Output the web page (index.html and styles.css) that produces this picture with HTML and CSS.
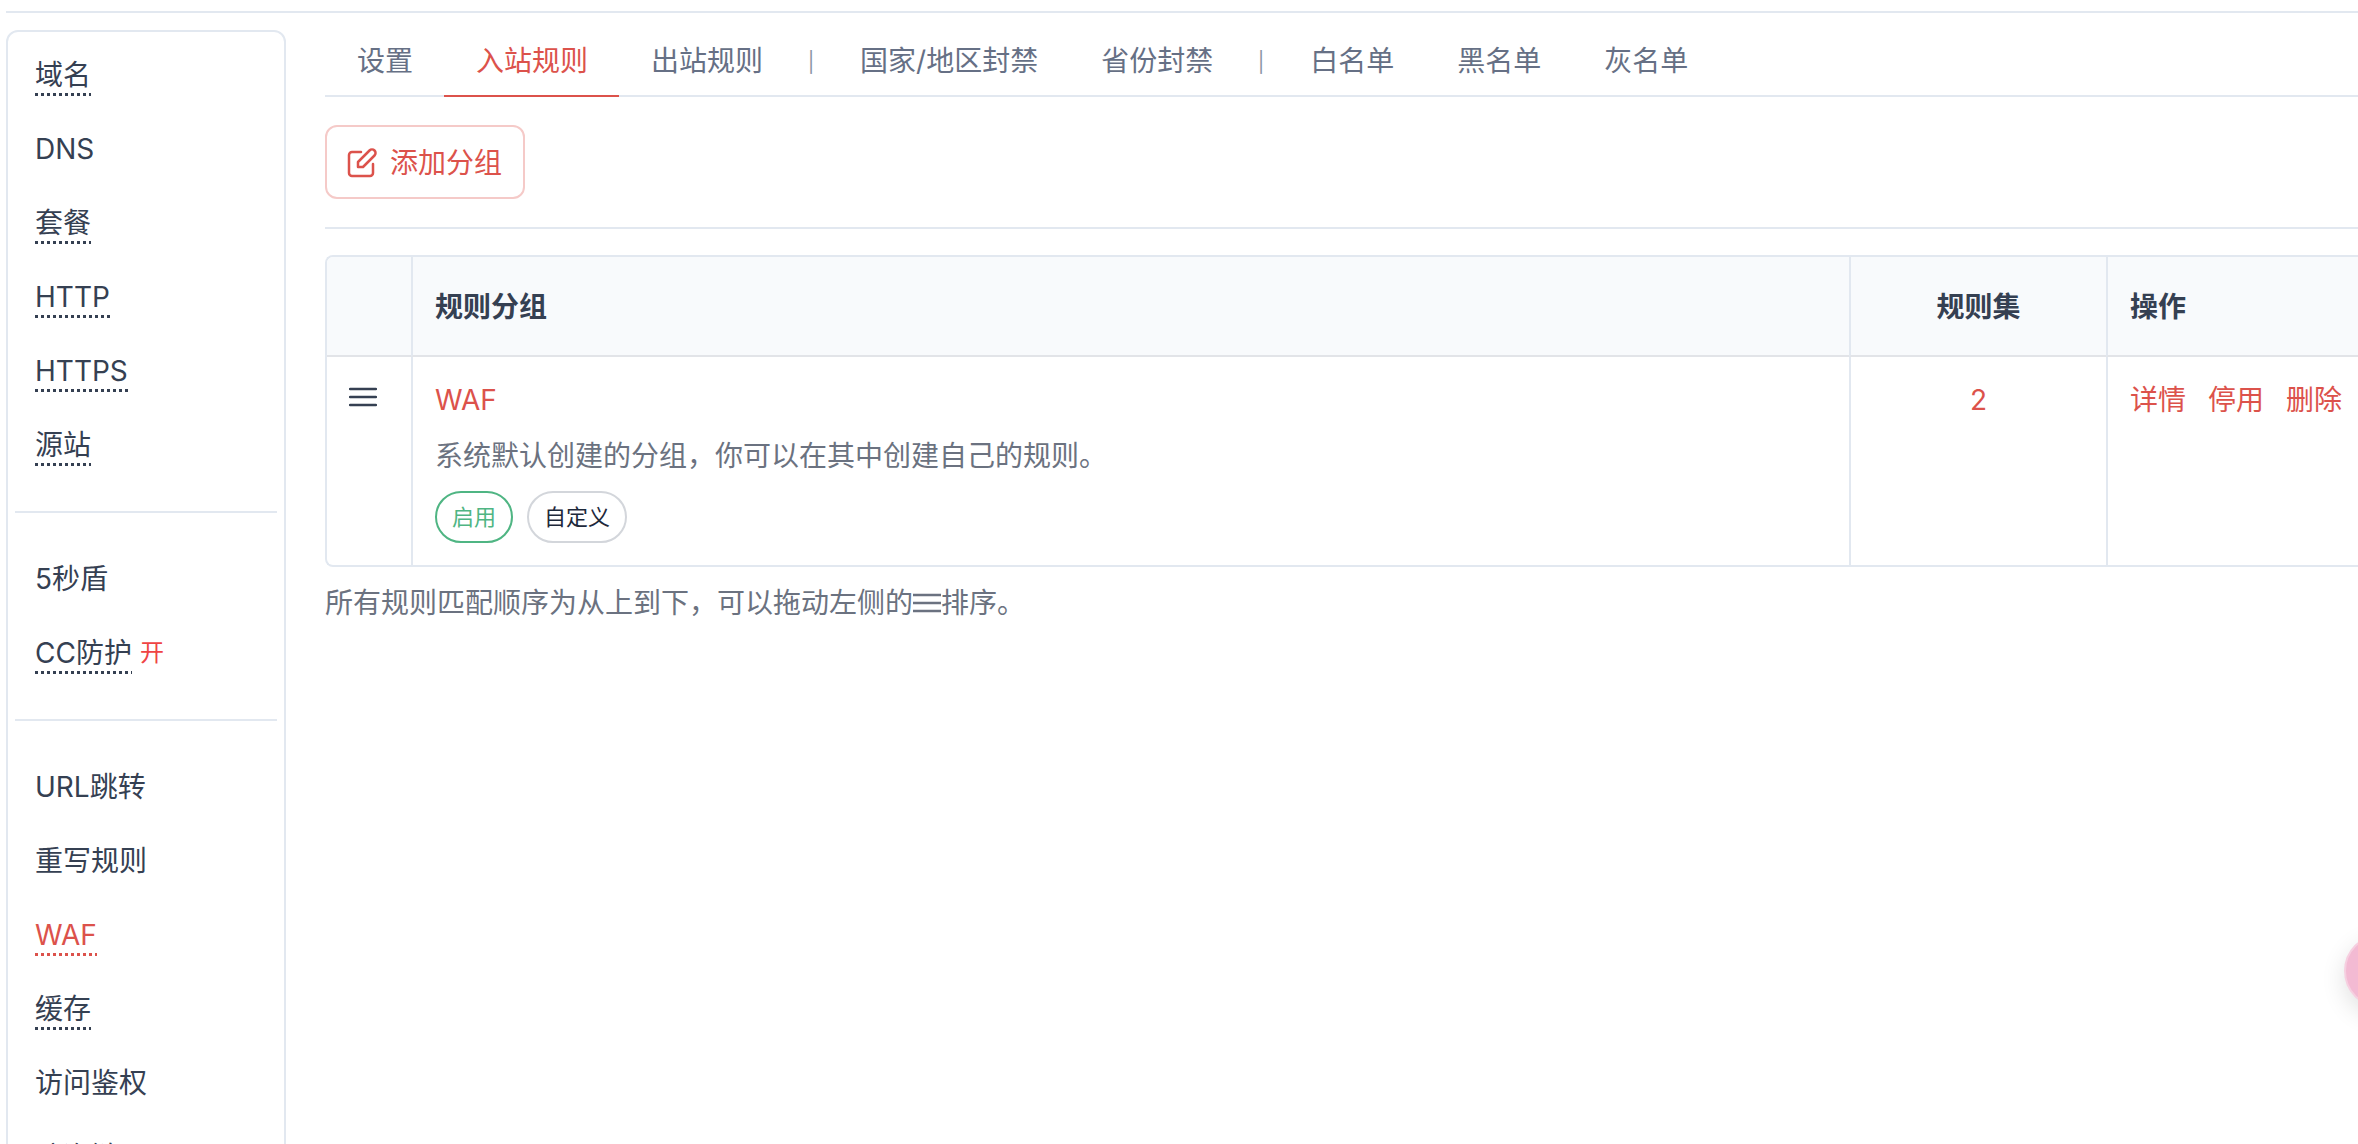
FILE: index.html
```
<!DOCTYPE html>
<html lang="zh-CN">
<head>
    <meta charset="UTF-8">
    <meta name="viewport" content="width=device-width, initial-scale=1.0">
    <title>WAF - 入站规则</title>
    <link rel="stylesheet" href="styles.css">
</head>
<body>
    <div class="page">
        <nav class="sidebar">
            <a href="#"><span class="configured">域名</span></a>
            <a href="#"><span>DNS</span></a>
            <a href="#"><span class="configured">套餐</span></a>
            <a href="#"><span class="configured">HTTP</span></a>
            <a href="#"><span class="configured">HTTPS</span></a>
            <a href="#"><span class="configured">源站</span></a>
            <hr>
            <a href="#"><span>5秒盾</span></a>
            <a href="#"><span class="configured">CC防护</span><span class="state">开</span></a>
            <hr>
            <a href="#"><span>URL跳转</span></a>
            <a href="#"><span>重写规则</span></a>
            <a href="#" class="active"><span class="configured">WAF</span></a>
            <a href="#"><span class="configured">缓存</span></a>
            <a href="#"><span>访问鉴权</span></a>
            <a href="#"><span>防盗链</span></a>
        </nav>

        <main class="content">
            <nav class="tabs">
                <a href="#">设置</a>
                <a href="#" class="active">入站规则</a>
                <a href="#">出站规则</a>
                <span class="separator">|</span>
                <a href="#">国家/地区封禁</a>
                <a href="#">省份封禁</a>
                <span class="separator">|</span>
                <a href="#">白名单</a>
                <a href="#">黑名单</a>
                <a href="#">灰名单</a>
            </nav>

            <div class="toolbar">
                <button type="button" class="add-button">
                    <svg class="edit-icon" viewBox="0 0 32 32" aria-hidden="true">
                        <path d="M15 5H6a3 3 0 0 0-3 3v18a3 3 0 0 0 3 3h18a3 3 0 0 0 3-3v-9"/>
                        <path d="M12 20v-5L23.500 3.500a3.300 3.300 0 0 1 5 5L17 20z"/>
                    </svg>
                    添加分组
                </button>
            </div>

            <table class="groups">
                <thead>
                    <tr>
                        <th class="col-handle"></th>
                        <th>规则分组</th>
                        <th class="col-sets">规则集</th>
                        <th class="col-actions">操作</th>
                    </tr>
                </thead>
                <tbody>
                    <tr>
                        <td class="col-handle">
                            <svg class="bars-icon" viewBox="0 0 28 24" aria-hidden="true">
                                <path d="M1 3h26M1 11h26M1 19h26"/>
                            </svg>
                        </td>
                        <td>
                            <a href="#">WAF</a>
                            <p class="description">系统默认创建的分组，你可以在其中创建自己的规则。</p>
                            <div class="badges">
                                <span class="badge on">启用</span>
                                <span class="badge">自定义</span>
                            </div>
                        </td>
                        <td class="col-sets"><a href="#">2</a></td>
                        <td class="col-actions">
                            <div class="actions">
                                <a href="#">详情</a>
                                <a href="#">停用</a>
                                <a href="#">删除</a>
                            </div>
                        </td>
                    </tr>
                </tbody>
            </table>

            <p class="note">所有规则匹配顺序为从上到下，可以拖动左侧的<svg class="bars-icon" viewBox="0 0 28 24" aria-hidden="true"><path d="M0 3h28M0 11h28M0 19h28"/></svg>排序。</p>
        </main>
    </div>

    <button type="button" class="float-button" aria-label="帮助"></button>
</body>
</html>
```
FILE: styles.css
```
* {
    box-sizing: border-box;
    margin: 0;
    padding: 0;
}

body {
    height: 100vh;
    overflow: hidden;
    font-family: Inter, "Noto Sans CJK SC", sans-serif;
    font-size: 28px;
    line-height: 40px;
    color: #354052;
    background-color: #fff;
}

a {
    color: #dc524b;
    text-decoration: none;
}

.page {
    display: flex;
    align-items: flex-start;
    gap: 39px;
    margin: 11px 0 0 6px;
    padding-top: 17px;
    border-top: 2px solid #e2e8f0;
}

/* left menu */
.sidebar {
    flex: none;
    width: 280px;
    padding: 5px 7px;
    border: 2px solid #e2e8f0;
    border-radius: 12px;
}

.sidebar a {
    display: flex;
    align-items: center;
    gap: 8px;
    height: 74px;
    padding: 0 20px;
    color: #354052;
}

.sidebar a.active {
    color: #dc524b;
}

.sidebar hr {
    margin: 30px 0 28px;
    border: none;
    border-top: 2px solid #e2e8f0;
}

.sidebar span {
    padding: 3px 0 1px;
}

.configured {
    background: repeating-linear-gradient(to right, currentColor 0 3px, transparent 3px 6px) left bottom / 100% 3px no-repeat;
}

.state {
    font-size: 24px;
    color: #ef4444;
}

/* tabs */
.content {
    flex: 1;
    min-width: 0;
}

.tabs {
    display: flex;
    height: 67px;
    border-bottom: 2px solid #e2e8f0;
}

.tabs a {
    height: 67px;
    padding: 11px 31px 0 32px;
    color: #667085;
    border-bottom: 2px solid transparent;
}

.tabs a.active {
    color: #dc524b;
    border-bottom-color: #dc524b;
}

.separator {
    width: 34px;
    padding: 12px 0;
    font-size: 20px;
    text-align: center;
    color: #8b95a5;
}

.toolbar {
    padding: 28px 0;
    border-bottom: 2px solid #e2e8f0;
}

.add-button {
    display: flex;
    align-items: center;
    gap: 12px;
    height: 74px;
    padding: 2px 21px 0 19px;
    font: inherit;
    color: #dc524b;
    background-color: #fff;
    border: 2px solid #f5cac8;
    border-radius: 12px;
    cursor: pointer;
}

.edit-icon {
    width: 32px;
    height: 32px;
    fill: none;
    stroke: currentColor;
    stroke-width: 2.5;
    stroke-linecap: round;
    stroke-linejoin: round;
}

/* rule groups */
.groups {
    width: 100%;
    margin-top: 26px;
    border: 2px solid #e2e8f0;
    border-right: none;
    border-radius: 8px 0 0 8px;
    border-spacing: 0;
    table-layout: fixed;
}

.groups th,
.groups td {
    padding: 23px 22px 20px;
    text-align: left;
    vertical-align: top;
    border-left: 2px solid #e2e8f0;
}

.groups th {
    height: 100px;
    padding-top: 30px;
    font-weight: 600;
    background-color: #f8fafc;
    border-bottom: 2px solid #e2e4e8;
}

.groups td {
    height: 208px;
}

.groups .col-handle {
    width: 84px;
    border-left: none;
}

.groups th.col-handle {
    border-top-left-radius: 6px;
}

.groups .col-sets {
    width: 257px;
    text-align: center;
}

.groups .col-actions {
    width: 252px;
    padding-right: 0;
}

.bars-icon {
    width: 28px;
    height: 24px;
    fill: none;
    stroke: currentColor;
    stroke-width: 2.5;
    stroke-linecap: round;
}

.description {
    margin-top: 16px;
    color: #6b7280;
}

.badges {
    display: flex;
    gap: 14px;
    margin-top: 15px;
}

.badge {
    height: 52px;
    padding: 0 15px;
    font-size: 22px;
    line-height: 48px;
    color: #1e293b;
    border: 2px solid #d3d6db;
    border-radius: 26px;
}

.badge.on {
    color: #4fb583;
    border-color: #4fb583;
}

.actions {
    display: flex;
    gap: 22px;
    white-space: nowrap;
}

.note {
    margin-top: 16px;
    color: #6b7280;
}

.note .bars-icon {
    vertical-align: -3px;
}

/* sits half outside the right edge of the window */
.float-button {
    position: fixed;
    top: 934px;
    right: -60px;
    width: 74px;
    height: 74px;
    background-color: #f3bad3;
    border: 2px solid #f6cfe0;
    border-radius: 50%;
    box-shadow: 0 8px 24px rgba(0, 0, 0, 0.12);
    cursor: pointer;
}
```
